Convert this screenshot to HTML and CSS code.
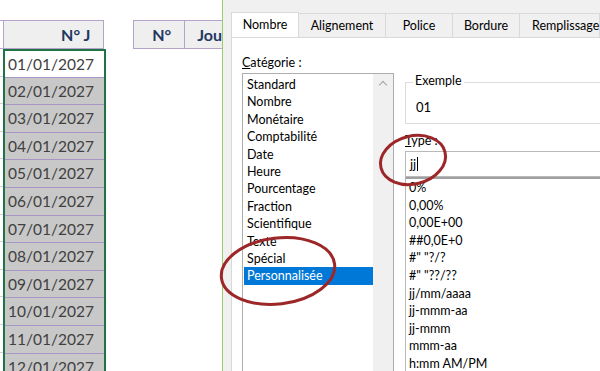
FILE: index.html
```html
<!DOCTYPE html>
<html>

<head>
    <link rel="stylesheet" href="styles.css">
</head>
<body>
    <div class="page">
        <div class="sheet">
            <div class="top-row"></div>
            <div class="head">
                <div class="stub"></div>
                <div class="cell nj">N° J</div>
                <div class="gap"></div>
                <div class="cell n">N°</div>
                <div class="cell jou">Jou</div>
            </div>
            <div class="body">
                <div class="stub-col" id="stubCol"></div>
                <div class="dates" id="dates"></div>
            </div>
        </div>

        <div class="dialog">
            <div class="tabs">
                <div class="tab active t1">Nombre</div>
                <div class="tab t2">Alignement</div>
                <div class="tab t3">Police</div>
                <div class="tab t4">Bordure</div>
                <div class="tab t5">Remplissage</div>
            </div>
            <div class="panel">
                <div class="cat">
                    <div class="label"><u>C</u>atégorie :</div>
                    <div class="listbox">
                        <ul class="items">
                            <li>Standard</li>
                            <li>Nombre</li>
                            <li>Monétaire</li>
                            <li>Comptabilité</li>
                            <li>Date</li>
                            <li>Heure</li>
                            <li>Pourcentage</li>
                            <li>Fraction</li>
                            <li>Scientifique</li>
                            <li>Texte</li>
                            <li>Spécial</li>
                            <li class="selected">Personnalisée</li>
                        </ul>
                        <div class="scroll"><span class="arrow"></span></div>
                    </div>
                </div>
                <div class="right">
                    <div class="sample">
                        <div class="legend">Exemple</div>
                        <div class="value">01</div>
                    </div>
                    <div class="label type-label"><u>T</u>ype :</div>
                    <div class="type-input">jj<span class="caret"></span></div>
                    <ul class="types">
                        <li>0%</li>
                        <li>0,00%</li>
                        <li>0,00E+00</li>
                        <li>##0,0E+0</li>
                        <li>#" "?/?</li>
                        <li>#" "??/??</li>
                        <li>jj/mm/aaaa</li>
                        <li>jj-mmm-aa</li>
                        <li>jj-mmm</li>
                        <li>mmm-aa</li>
                        <li>h:mm AM/PM</li>
                    </ul>
                </div>
            </div>
        </div>

        <svg class="marks" width="600" height="371" viewBox="0 0 600 371">
            <ellipse cx="413" cy="160" rx="33" ry="24" transform="rotate(-14 413 160)" />
            <ellipse cx="278" cy="271" rx="57" ry="33" transform="rotate(-7 278 271)" />
        </svg>
    </div>
    <script>
        var cells = "";
        var stubs = "";
        for (i = 1; i <= 12; i++) {
            var d = (i < 10 ? "0" + i : i) + "/01/2027";
            cells += "<div class='row" + (i == 1 ? " first" : "") + "'>" + d + "</div>";
            stubs += "<div class='stub-row'></div>";
        }
        document.getElementById("dates").innerHTML = cells;
        document.getElementById("stubCol").innerHTML = stubs;
    </script>
</body>

</html>
```

FILE: styles.css
```css
* {
    margin: 0;
    padding: 0;
    box-sizing: border-box;
}

ul {
    list-style-type: none;
}

body {
    width: 600px;
    height: 371px;
    overflow: hidden;
    background-color: #fff;
}

.page {
    position: relative;
    display: flex;
    width: 600px;
    height: 371px;
    overflow: hidden;
}

/* spreadsheet */

.sheet {
    width: 222px;
    flex: none;
    font-family: Lato, sans-serif;
}

.top-row {
    height: 20px;
}

.head {
    display: flex;
    height: 29px;
}

.head .stub {
    width: 4px;
    border-top: 1px solid #b4a3cb;
    border-bottom: 1px solid #b4a3cb;
    border-right: 1px solid #b4a3cb;
}

.cell {
    background-color: #efefef;
    border-top: 1px solid #b4a3cb;
    border-bottom: 1px solid #b4a3cb;
    color: #1f3864;
    font-weight: bold;
    font-size: 16px;
    line-height: 27px;
}

.nj {
    width: 102px;
    border-right: 1px solid #b4a3cb;
    text-align: right;
    padding-right: 13px;
}

.gap {
    width: 29px;
}

.n {
    width: 53px;
    border-left: 1px solid #b4a3cb;
    border-right: 1px solid #b4a3cb;
    text-align: right;
    padding-right: 13px;
}

.jou {
    flex: 1;
    padding-left: 12px;
    white-space: nowrap;
}

.body {
    display: flex;
}

.stub-col {
    width: 3px;
}

.stub-row {
    height: 27.6px;
    border-bottom: 1px solid #d0d0d0;
}

.dates {
    width: 103px;
    border-left: 2px solid #217346;
    border-right: 2px solid #217346;
}

.row {
    height: 27.6px;
    padding-left: 3px;
    background-color: #c8c8c8;
    border-top: 1px solid #a995c6;
    color: #404040;
    font-size: 15.5px;
    line-height: 27px;
}

.row.first {
    background-color: #fff;
    border-top: 2px solid #217346;
    line-height: 26px;
}

/* dialog */

.dialog {
    flex: 1;
    display: flex;
    flex-direction: column;
    background-color: #f0f0f0;
    border-left: 1px solid #9bcb6a;
    font-family: Lato, sans-serif;
    font-size: 12.5px;
    color: #000;
}

.tabs {
    display: flex;
    height: 37px;
    padding-top: 13px;
    padding-left: 8px;
}

.tab {
    height: 24px;
    line-height: 23px;
    border: 1px solid #d9d9d9;
    border-left: none;
    border-bottom: none;
    text-align: center;
    white-space: nowrap;
}

.tab.active {
    background-color: #fff;
    border-left: 1px solid #d9d9d9;
    height: 25px;
    margin-top: -1px;
    margin-bottom: -1px;
    position: relative;
}

.t1 { width: 68px; }
.t2 { width: 87px; }
.t3 { width: 67px; }
.t4 { width: 67px; }
.t5 { flex: 1; text-align: left; padding-left: 12px; }

.panel {
    flex: 1;
    display: flex;
    gap: 11px;
    margin-left: 8px;
    padding-left: 10px;
    padding-top: 16px;
    background-color: #fff;
    border-top: 1px solid #d9d9d9;
    border-left: 1px solid #d9d9d9;
}

.label {
    height: 19px;
    line-height: 18px;
}

.label u {
    text-decoration-thickness: 1px;
}

.cat {
    width: 152px;
    flex: none;
    display: flex;
    flex-direction: column;
}

.listbox {
    flex: 1;
    display: flex;
    border: 1px solid #adadad;
    border-bottom: none;
}

.items {
    flex: 1;
    padding: 2px 0 0 1px;
}

.items li {
    height: 17.4px;
    line-height: 17px;
    padding-left: 3px;
}

.items li.selected {
    background-color: #0078d7;
    color: #fff;
}

.scroll {
    width: 20px;
    background-color: #f0f0f0;
    display: flex;
    justify-content: center;
}

.arrow {
    margin-top: 8px;
    width: 6px;
    height: 6px;
    border-left: 1.5px solid #a3a3a3;
    border-top: 1.5px solid #a3a3a3;
    transform: rotate(45deg);
}

.right {
    flex: 1;
    display: flex;
    flex-direction: column;
}

.sample {
    position: relative;
    margin-top: 28px;
    height: 42px;
    border: 1px solid #dcdcdc;
    border-right: none;
    padding: 16px 0 0 10px;
    font-size: 13px;
}

.legend {
    position: absolute;
    top: -10px;
    left: 7px;
    padding: 0 2px;
    background-color: #fff;
    font-size: 12.5px;
}

.type-label {
    margin-top: 8px;
}

.type-input {
    height: 26px;
    border: 1px solid #b9b9b9;
    border-right: none;
    padding-left: 4px;
    line-height: 24px;
    font-size: 13px;
}

.caret {
    display: inline-block;
    width: 1px;
    height: 14px;
    margin-left: 1px;
    vertical-align: -2px;
    background-color: #000;
}

.types {
    flex: 1;
    border-top: 2px solid #a0a0a0;
    border-left: 1px solid #b9b9b9;
    padding: 0 0 0 3px;
}

.types li {
    height: 17.6px;
    line-height: 17px;
}

.marks {
    position: absolute;
    left: 0;
    top: 0;
    pointer-events: none;
}

.marks ellipse {
    fill: none;
    stroke: #9d2628;
    stroke-width: 3;
}
```
